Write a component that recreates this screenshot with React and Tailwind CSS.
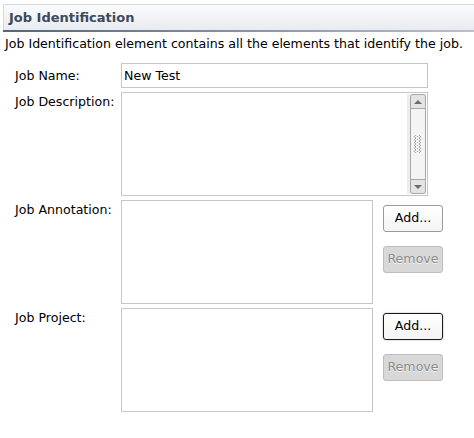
import React from 'react';

/**
 * Job Identification 섹션
 */
const ListField = ({ focused }) => (
  <div className="flex items-start">
    <div className="w-[252px] h-[104px] border border-[#c6c6c6] bg-white"></div>
    <div className="ml-[10px] mt-[5px] flex flex-col gap-[14px]">
      <button
        className={`w-[60px] h-[27px] rounded-[3px] border bg-gradient-to-b from-white to-[#f4f4f4] text-[12.6px] text-black leading-none ${
          focused ? 'border-[#1a1a1a] shadow-[0_0_2px_rgba(0,0,0,0.35)]' : 'border-[#9a9a9a]'
        }`}
      >
        Add...
      </button>
      <button
        disabled
        className="w-[60px] h-[27px] rounded-[3px] border border-[#bdbdbd] bg-[#d8d8d8] text-[12.6px] text-[#8c8c8c] leading-none [text-shadow:0_1px_0_#f4f4f4]"
      >
        Remove
      </button>
    </div>
  </div>
);

const Scrollbar = () => (
  <div className="flex h-full bg-[#ededed] pl-[3px]">
    <div className="flex flex-col w-[16px] h-full">
      <div className="h-[15px] rounded-t-[3px] border border-[#a6a6a6] bg-[#e4e4e4] flex items-center justify-center">
        <div className="w-0 h-0 border-l-[4px] border-r-[4px] border-b-[4px] border-l-transparent border-r-transparent border-b-[#6e6e6e]"></div>
      </div>
      <div className="flex-1 border-x border-[#a6a6a6] bg-[#f4f4f4] flex items-center justify-center">
        <svg width="8" height="18" viewBox="0 0 8 18">
          {[0, 3, 6, 9, 12, 15].map((y) => (
            <g key={y} fill="#a8a8a8">
              <rect x="1" y={y} width="1" height="1" />
              <rect x="5" y={y} width="1" height="1" />
              <rect x="3" y={y + 1} width="1" height="1" />
              <rect x="0" y={y + 1} width="1" height="1" />
              <rect x="6" y={y + 1} width="1" height="1" />
              <rect x="1" y={y + 2} width="1" height="1" />
              <rect x="5" y={y + 2} width="1" height="1" />
            </g>
          ))}
        </svg>
      </div>
      <div className="h-[15px] rounded-b-[3px] border border-[#a6a6a6] bg-[#e4e4e4] flex items-center justify-center">
        <div className="w-0 h-0 border-l-[4px] border-r-[4px] border-t-[4px] border-l-transparent border-r-transparent border-t-[#6e6e6e]"></div>
      </div>
    </div>
  </div>
);

export default function App() {
  return (
    <div className="w-[474px] h-[438px] bg-white text-black text-[12.6px] leading-[14px] font-['DejaVu_Sans',sans-serif] overflow-hidden">
      {/* 섹션 헤더 */}
      <div className="ml-[3px] pt-[4px]">
        <div className="h-[26px] rounded-tl-[2px] border-t border-l border-[#d2d8e0] bg-gradient-to-b from-[#fbfbfc] to-[#e8ebf0] flex items-center pl-[5px]">
          <span className="font-bold text-[#3c4a5c] text-[13px]">Job Identification</span>
        </div>
        <div className="h-[2px] bg-gradient-to-r from-[#56657a] to-[#b9c1cc]"></div>
      </div>

      {/* 설명 */}
      <p className="mt-[5px] ml-[5px] whitespace-nowrap">
        Job Identification element contains all the elements that identify the job.
      </p>

      {/* 폼 */}
      <div className="mt-[12px] pl-[15px] grid grid-cols-[106px_1fr] gap-y-[4px]">
        <div className="h-[25px] flex items-center">Job Name:</div>
        <div className="w-[307px] h-[25px] border border-[#c6c6c6] flex items-center pl-[2px]">New Test</div>

        <div className="pt-[3px]">Job Description:</div>
        <div className="w-[307px] h-[104px] border border-[#c6c6c6] flex justify-end pr-[1px] py-[1px]">
          <Scrollbar />
        </div>

        <div className="pt-[3px]">Job Annotation:</div>
        <ListField />

        <div className="pt-[3px]">Job Project:</div>
        <ListField focused />
      </div>
    </div>
  );
}
